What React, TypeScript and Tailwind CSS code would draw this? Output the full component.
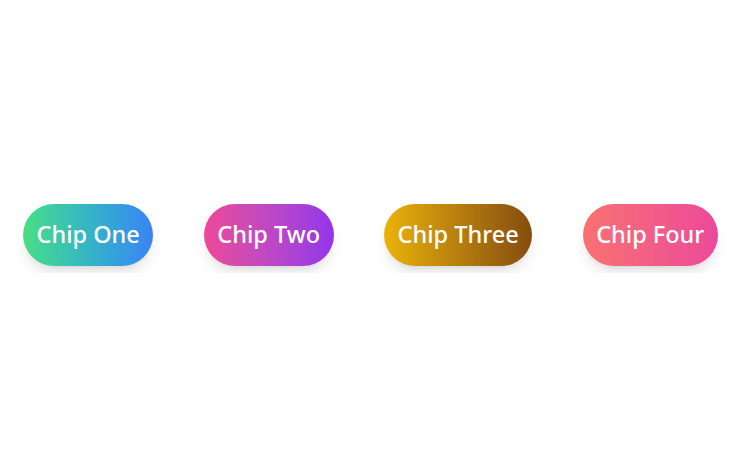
import React from "react";

const chips = [
  { label: "Chip One", cls: "bg-gradient-to-r from-[#4ade80] to-[#3b82f6]" },
  { label: "Chip Two", cls: "bg-gradient-to-r from-[#ec4899] to-[#9333ea]" },
  { label: "Chip Three", cls: "bg-gradient-to-r from-[#eab308] to-[#854d0e]" },
  { label: "Chip Four", cls: "bg-gradient-to-r from-[#f87171] to-[#ec4899]" },
];

export default function App() {
  return (
    <div className="w-[750px] h-[469px] bg-white flex items-center" style={{ fontFamily: '"Noto Sans", "Open Sans", sans-serif' }}>
      <div className="w-full overflow-x-auto py-[7px] pl-[23px] flex gap-[50.5px]">
        {chips.map((c) => (
          <div
            key={c.label}
            className={`${c.cls} shrink-0 h-[62px] px-[13.5px] rounded-full flex items-center text-white text-[23.5px] font-medium shadow-lg whitespace-nowrap`}
          >
            {c.label}
          </div>
        ))}
      </div>
    </div>
  );
}
